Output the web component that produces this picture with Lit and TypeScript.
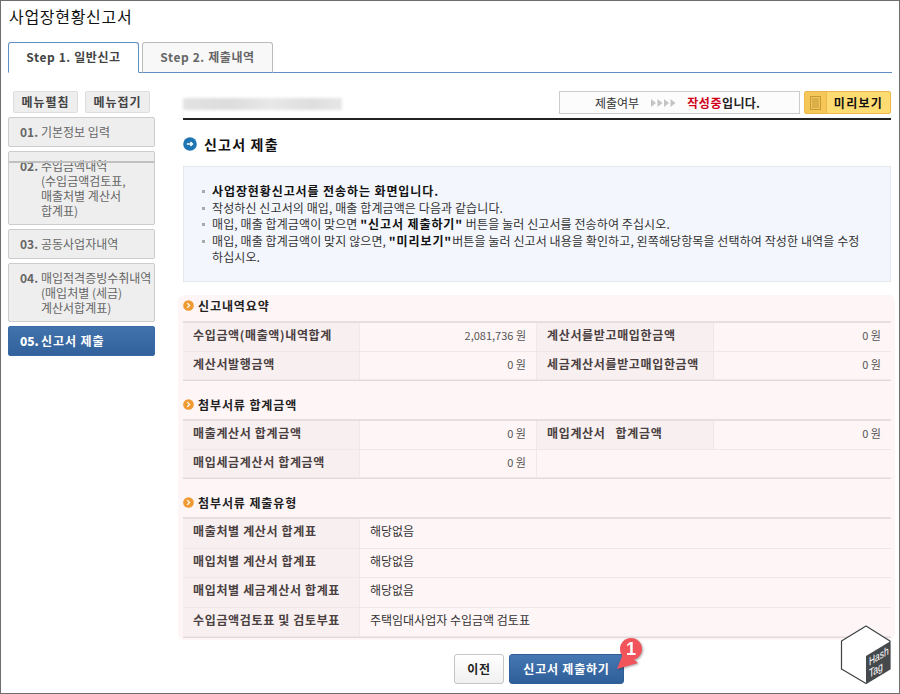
import { LitElement, html, css, svg } from "lit";
import { customElement } from "lit/decorators.js";

const bullet = (c: unknown) => html`<li>${c}</li>`;

@customElement("app-root")
export class AppRoot extends LitElement {
  static styles = css`
    :host { display: block; width: 900px; height: 694px; position: relative; overflow: hidden; box-sizing: border-box;
      border: 1px solid #6e6e6e; background: #fff;
      font-family: "Noto Sans CJK KR", "Liberation Sans", sans-serif; font-size: 12px; color: #333; }
    * { box-sizing: border-box; }
    h1 { margin: 0; height: 41px; padding: 4px 0 0 8px; font-size: 16px; line-height: 22px; font-weight: 400; color: #111; letter-spacing: .7px; }
    .tabs { display: flex; gap: 3px; margin: 0 7px 0 7px; height: 31px; border-bottom: 1px solid #5f8fc4; }
    .tab { width: 131px; height: 31px; border: 1px solid #bbb; border-bottom: 1px solid #5f8fc4; border-radius: 3px 3px 0 0; background: #f8f8f8;
      text-align: center; line-height: 28px; font-weight: 700; color: #666; letter-spacing: .6px; }
    .tab.on { background: #fff; border-color: #5f8fc4; border-bottom-color: #fff; color: #444; }
    .body { display: flex; }
    .side { width: 147px; margin: 18px 0 0 7px; flex: none; }
    .toggles { display: flex; gap: 7px; padding-left: 5px; margin-bottom: 4px; }
    .toggles span { width: 65px; height: 22px; background: #eee; border: 1px solid #ddd; border-radius: 2px; text-align: center; line-height: 20px; font-weight: 700; color: #444; letter-spacing: 1px; }
    .item { position: relative; display: flex; background: #eee; border: 1px solid #ccc; border-radius: 2px; margin-bottom: 4px; padding: 6px 0 0 11px; line-height: 15px; color: #666; overflow: hidden; white-space: nowrap; }
    .item b { width: 21px; flex: none; letter-spacing: 0; }
    .item.h1 { height: 30px; }
    .item.h2 { height: 74px; }
    .item.h2::after { content: ""; position: absolute; left: 0; right: 0; top: 9px; height: 1.5px; background: #c0c0c0; }
    .item.h3 { height: 30px; }
    .item.h4 { height: 59px; }
    .item.on { height: 30px; background: linear-gradient(#4273ac, #32619b); border-color: #3a6aa5; color: #fff; font-weight: 700; letter-spacing: .9px; }
    .main { width: 708px; margin: 18px 0 0 28px; flex: none; }
    .top { display: flex; align-items: flex-start; border-bottom: 2px solid #222; justify-content: space-between; height: 29px; }
    .blur { width: 159px; height: 12px; margin-top: 7px; filter: blur(1.5px); background: linear-gradient(90deg, #e2e2e2, #dcdcdc 30%, #e8e8e8 55%, #dedede 80%, #e6e6e6); }
    .status { display: flex; gap: 4px; }
    .box { width: 241px; height: 23px; display: flex; align-items: center; padding-left: 35px; border: 1px solid #ccc; background: #fcfcfc; line-height: 21px; }
    .arrows { margin: 0 11px 0 12px; flex: none; display: block; }
    .box em { font-style: normal; font-weight: 700; color: #d0021b; letter-spacing: .6px; }
    .box strong { color: #222; letter-spacing: .3px; }
    .pv { display: flex; width: 87px; height: 23px; background: #ffdc72; border: 1px solid #eab84d; border-radius: 2px; }
    .pv i { width: 22px; flex: none; background: #f5c758; border-right: 1px solid #eab84d; display: flex; align-items: center; justify-content: center; }
    .pv span { flex: 1; text-align: center; line-height: 21px; font-weight: 700; color: #111; letter-spacing: 1.3px; }
    .sec { display: flex; align-items: center; gap: 7px; height: 20px; margin-top: 14px; font-size: 14px; font-weight: 700; color: #111; letter-spacing: 1.2px; }
    .info { height: 116px; margin-top: 12px; padding: 16px 10px 0 18px; background: #f3f7fd; border: 1px solid #e4e9f0; line-height: 16.6px; color: #333; letter-spacing: .1px; white-space: nowrap; }
    ul { margin: 0; padding: 0; list-style: none; }
    li { position: relative; padding-left: 10px; }
    li::before { content: ""; position: absolute; left: 0; top: 7px; width: 3px; height: 3px; background: #aaa; }
    li b { color: #111; letter-spacing: .9px; }
    .pink { margin: 13px -4px 0 -5px; padding: 0 4px 0 5px; height: 345px; background: #fef5f6; border-radius: 6px; }
    h2 { display: flex; align-items: center; gap: 4px; margin: 0 0 4px; padding-bottom: 2px; height: 22px; font-size: 12px; font-weight: 700; color: #222; letter-spacing: .9px; }
    h2.next { margin-top: 13px; padding-bottom: 0; }
    .grid { display: grid; border-top: 2px solid #e6dedf; box-shadow: 0 1px 0 #e2dada; }
    .g4 { grid-template-columns: 177px 177px 177px 177px; }
    .g2 { grid-template-columns: 177px 531px; }
    .grid > div { height: 28.5px; line-height: 23px; padding: 0 10px; border-bottom: 1px solid #f2e6e7; border-right: 1px solid #f2e6e7; white-space: nowrap; }
    .grid.g2 > div { height: 29.5px; line-height: 24px; }
    .grid > .end { border-right: 0; }
    .grid > .wide { grid-column: 3 / 5; }
    .grid .th { background: #f7eff0; font-weight: 700; color: #4a4040; letter-spacing: .65px; }
    .grid .num { text-align: right; color: #555; font-size: 11px; line-height: 25px; }
    .actions { display: flex; justify-content: center; gap: 5px; margin-top: 14px; padding-left: 4px; }
    .btn { height: 30px; border-radius: 3px; text-align: center; line-height: 28px; font-weight: 700; }
    .prev { width: 50px; background: linear-gradient(#fff, #f0f0f0); border: 1px solid #c5c5c5; color: #222; letter-spacing: .6px; }
    .go { width: 115px; background: linear-gradient(#4577b2, #2f5f99); border: 1px solid #2f5f99; color: #fff; letter-spacing: .8px; }
    .badge { position: absolute; left: 610px; top: 635px; width: 36px; height: 40px; filter: drop-shadow(1px 1px 1px rgba(0,0,0,.35)); }
    .logo { position: absolute; left: 837px; top: 624px; width: 54px; height: 60px; }
  `;

  private rows4(rows: string[][]) {
    return rows.map(r => html`
      <div class="th">${r[0]}</div><div class="num">${r[1]}</div>
      ${r[2]
        ? html`<div class="th">${r[2]}</div><div class="num end">${r[3]}</div>`
        : html`<div class="wide end"></div>`}`);
  }

  private dot() {
    return html`<svg width="11" height="11" viewBox="0 0 12 12"><circle cx="6" cy="6" r="5.8" fill="#ef9a33"/><path d="M4.6 3.4 7.2 6 4.6 8.6" fill="none" stroke="#fff" stroke-width="1.4"/></svg>`;
  }

  render() {
    return html`
      <h1>사업장현황신고서</h1>
      <div class="tabs"><div class="tab on">Step 1. 일반신고</div><div class="tab">Step 2. 제출내역</div></div>
      <div class="body">
        <div class="side">
          <div class="toggles"><span>메뉴펼침</span><span>메뉴접기</span></div>
          <div class="item h1"><b>01.</b><span>기본정보 입력</span></div>
          <div class="item h2"><b>02.</b><span>수입금액내역<br>(수입금액검토표,<br>매출처별 계산서<br>합계표)</span></div>
          <div class="item h3"><b>03.</b><span>공동사업자내역</span></div>
          <div class="item h4"><b>04.</b><span>매입적격증빙수취내역<br>(매입처별 (세금)<br>계산서합계표)</span></div>
          <div class="item on"><b>05.</b><span>신고서 제출</span></div>
        </div>
        <div class="main">
          <div class="top">
            <div class="blur"></div>
            <div class="status">
              <div class="box">제출여부<svg class="arrows" width="25" height="8" viewBox="0 0 25 8"><path d="M0 0 5 4 0 8ZM6.5 0 11.5 4 6.5 8ZM13 0 18 4 13 8ZM19.5 0 24.5 4 19.5 8Z" fill="#c4c4c4"/></svg><em>작성중</em><strong>입니다.</strong></div>
              <div class="pv"><i><svg width="11" height="14" viewBox="0 0 11 14"><rect x=".5" y=".5" width="10" height="13" fill="#eec560" stroke="#c9982f"/><path d="M2 3h7M2 5h7M2 7h7M2 9h7M2 11h7" stroke="#c9982f"/></svg></i><span>미리보기</span></div>
            </div>
          </div>
          <div class="sec"><svg width="14" height="14" viewBox="0 0 14 14"><circle cx="7" cy="7" r="6.8" fill="#1f74b3"/><path d="M3.8 7h5.6M7.4 5 9.6 7 7.4 9" fill="none" stroke="#fff" stroke-width="1.3"/></svg>신고서 제출</div>
          <div class="info"><ul>
            ${bullet(html`<b>사업장현황신고서를 전송하는 화면입니다.</b>`)}
            ${bullet("작성하신 신고서의 매입, 매출 합계금액은 다음과 같습니다.")}
            ${bullet(html`매입, 매출 합계금액이 맞으면 <b>"신고서 제출하기"</b> 버튼을 눌러 신고서를 전송하여 주십시오.`)}
            ${bullet(html`매입, 매출 합계금액이 맞지 않으면, <b>"미리보기"</b>버튼을 눌러 신고서 내용을 확인하고, 왼쪽해당항목을 선택하여 작성한 내역을 수정<br>하십시오.`)}
          </ul></div>
          <div class="pink">
            <h2>${this.dot()}신고내역요약</h2>
            <div class="grid g4">${this.rows4([
              ["수입금액(매출액)내역합계", "2,081,736 원", "계산서를받고매입한금액", "0 원"],
              ["계산서발행금액", "0 원", "세금계산서를받고매입한금액", "0 원"],
            ])}</div>
            <h2 class="next">${this.dot()}첨부서류 합계금액</h2>
            <div class="grid g4">${this.rows4([
              ["매출계산서 합계금액", "0 원", "매입계산서\u00a0\u00a0 합계금액", "0 원"],
              ["매입세금계산서 합계금액", "0 원", "", ""],
            ])}</div>
            <h2 class="next">${this.dot()}첨부서류 제출유형</h2>
            <div class="grid g2">
              <div class="th">매출처별 계산서 합계표</div><div class="end">해당없음</div>
              <div class="th">매입처별 계산서 합계표</div><div class="end">해당없음</div>
              <div class="th">매입처별 세금계산서 합계표</div><div class="end">해당없음</div>
              <div class="th">수입금액검토표 및 검토부표</div><div class="end">주택임대사업자 수입금액 검토표</div>
            </div>
          </div>
          <div class="actions">
            <div class="btn prev">이전</div>
            <div class="btn go">신고서 제출하기</div>
          </div>
        </div>
      </div>
      <svg class="badge" viewBox="0 0 36 40">
        <path d="M6 33 13 15 27 27Z" fill="#f2545b"/>
        <circle cx="20" cy="13" r="11" fill="#f2545b"/>
        <text x="20" y="19" text-anchor="middle" font-size="18" font-weight="700" fill="#fff" font-family="Liberation Sans">1</text>
      </svg>
      <svg class="logo" viewBox="0 0 54 60">
        ${svg`<path d="M28 1 52 16V44L28 58.5 3.5 44V16Z" fill="#fff" stroke="#3f4245" stroke-width="1.2" stroke-linejoin="round"/>
        <path d="M28 31 52 16.5V44L28 58.5Z" fill="#46494c"/>
        <g font-family="Liberation Sans" font-size="12" fill="#fff">
          <text transform="translate(31 41) skewY(-31) scale(.7 1)">Hash</text>
          <text transform="translate(31 53) skewY(-31) scale(.72 1)">Tag</text>
        </g>`}
      </svg>
    `;
  }
}
